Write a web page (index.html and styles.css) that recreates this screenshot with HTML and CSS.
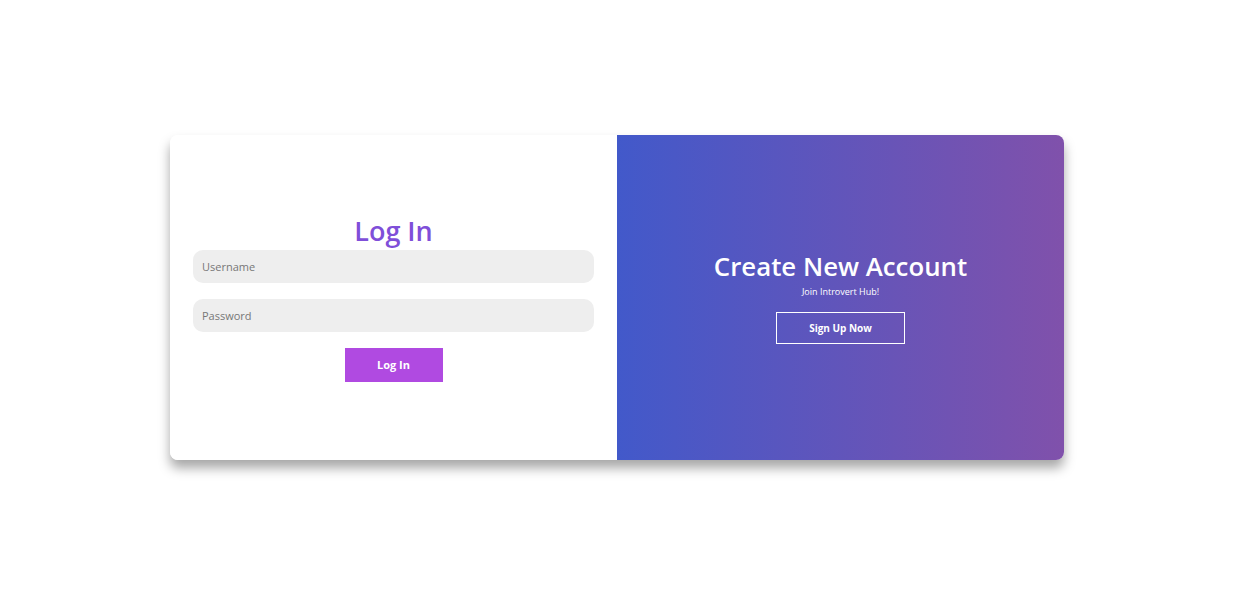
FILE: index.html
```html
<!DOCTYPE html>
<html lang="en">
<head>
<meta charset="utf-8">
<title>Introvert Hub - Log In</title>
<link rel="stylesheet" href="styles.css">
</head>
<body>
<main class="page">
  <div class="card">
    <section class="panel panel-login">
      <h1 class="login-title">Log In</h1>
      <form class="login-form">
        <input class="field" type="text" placeholder="Username">
        <input class="field" type="password" placeholder="Password">
        <button class="btn-login" type="button">Log In</button>
      </form>
    </section>
    <section class="panel panel-signup">
      <h2 class="signup-title">Create New Account</h2>
      <p class="signup-sub">Join Introvert Hub!</p>
      <button class="btn-signup" type="button">Sign Up Now</button>
    </section>
  </div>
</main>
</body>
</html>
```
FILE: styles.css
```css
* { box-sizing: border-box; }
html, body { margin: 0; padding: 0; height: 100%; }
body {
  background: #ffffff;
  font-family: "Open Sans", "Noto Sans", sans-serif;
}
.page {
  height: 100%;
  display: flex;
  align-items: center;
  justify-content: center;
}
.card {
  width: 894px;
  height: 325px;
  margin-top: 1px;
  display: flex;
  border-radius: 8px;
  overflow: hidden;
  box-shadow: 0 8px 12px rgba(0, 0, 0, 0.35);
}
.panel {
  flex: none;
  width: 50%;
  display: flex;
  flex-direction: column;
  align-items: center;
  justify-content: center;
}
.panel-login {
  background: #ffffff;
  padding: 2px 23px 0;
}
.login-title {
  margin: 0 0 3px;
  font-size: 27px;
  font-weight: 600;
  color: #7f4fd9;
  line-height: 32px;
}
.login-form {
  width: 100%;
  display: flex;
  flex-direction: column;
  align-items: center;
  gap: 16px;
}
.field {
  width: 100%;
  height: 33px;
  border: none;
  border-radius: 10px;
  background: #eeeeee;
  padding: 0 9px;
  font-family: inherit;
  font-size: 11px;
  color: #555;
  outline: none;
}
.field::placeholder { color: #777777; }
.btn-login {
  width: 98px;
  height: 34px;
  border: none;
  background: #b04ae1;
  color: #ffffff;
  font-family: inherit;
  font-weight: 700;
  font-size: 11px;
}
.panel-signup {
  background: linear-gradient(to right, #4259ca, #8051ab);
  color: #ffffff;
}
.signup-title {
  margin: 0;
  font-size: 25.8px;
  font-weight: 600;
  line-height: 32px;
}
.signup-sub {
  margin: 4px 0 14px;
  font-size: 9px;
  line-height: 12px;
}
.btn-signup {
  width: 129px;
  height: 32px;
  border: 1px solid #ffffff;
  background: transparent;
  color: #ffffff;
  font-family: inherit;
  font-weight: 700;
  font-size: 10px;
}
```
